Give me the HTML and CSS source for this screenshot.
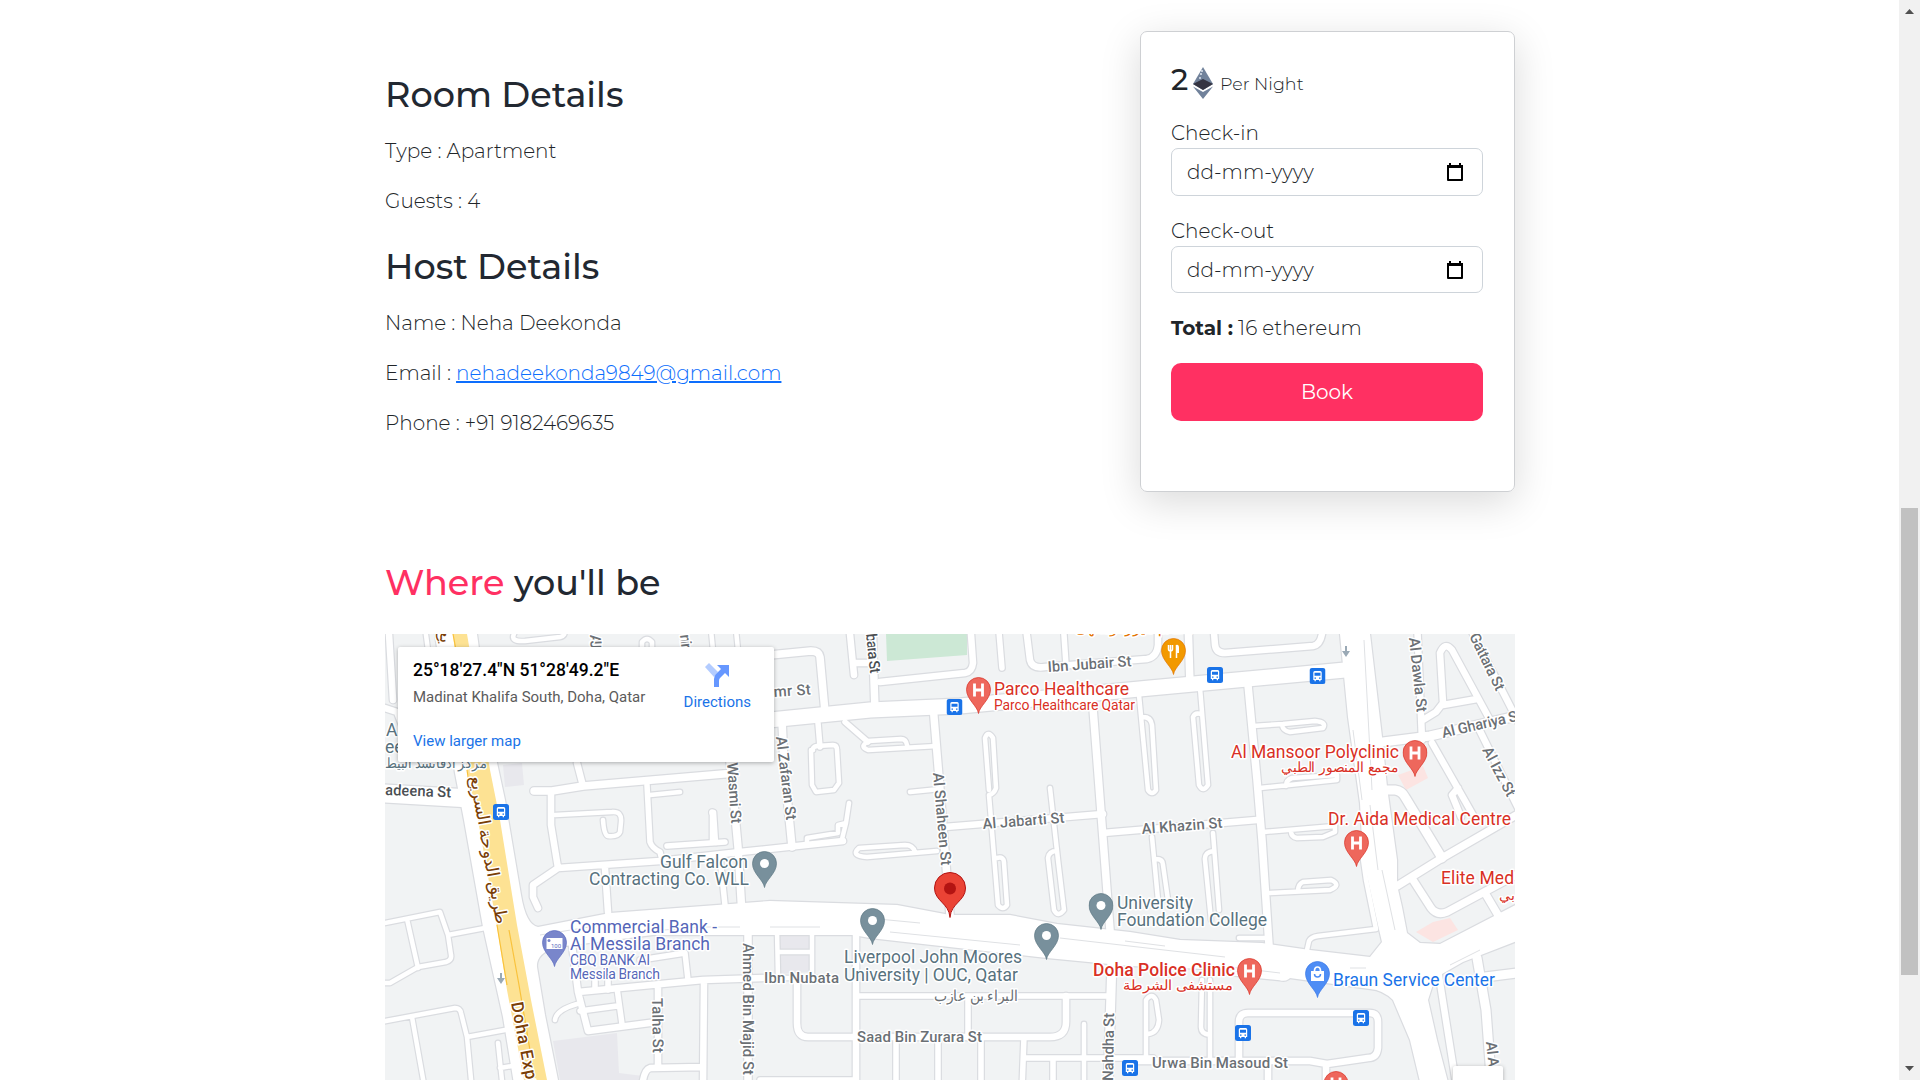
FILE: index.html
```html
<!DOCTYPE html>
<html lang="en">
<head>
  <meta charset="UTF-8">
  <meta name="viewport" content="width=device-width, initial-scale=1">
  <title>Room Details</title>
  <link rel="stylesheet" href="styles.css">
</head>
<body>
  <main class="page">
    <div class="details-row">
      <section class="details">
        <h3>Room Details</h3>
        <p>Type : Apartment</p>
        <p>Guests : 4</p>
        <h3 class="title-host">Host Details</h3>
        <p>Name : Neha Deekonda</p>
        <p>Email : <a href="mailto:nehadeekonda9849@gmail.com">nehadeekonda9849@gmail.com</a></p>
        <p>Phone : +91 9182469635</p>
      </section>

      <form class="booking-card">
        <div class="price">
          <span class="amount">2</span>
          <svg class="eth" viewBox="0 0 20 32">
            <path d="M10 0 0 17l10 6 10-6z" fill="#71829b"/>
            <path d="M10 12 0 17l10 6 10-6z" fill="#343442"/>
            <path d="m0 19.500 10 12.500 10-12.500-10 5.500z" fill="#71829b"/>
            <path d="M9 3v2M8 6v2M7 10v2" stroke="#dfe6ef" stroke-width="1.500"/>
          </svg>
          <small>Per Night</small>
        </div>

        <label for="check-in">Check-in</label>
        <div class="date-field">
          <input type="text" id="check-in" value="dd-mm-yyyy">
          <svg class="calendar" viewBox="0 0 16 18"><path d="M1 3h14v14H1z" fill="none" stroke="#000" stroke-width="2" stroke-linejoin="round"/><path d="M0 2h16v3H0zM2 0h2v3H2zM12 0h2v3h-2z"/></svg>
        </div>

        <label for="check-out" class="label-out">Check-out</label>
        <div class="date-field field-out">
          <input type="text" id="check-out" value="dd-mm-yyyy">
          <svg class="calendar" viewBox="0 0 16 18"><path d="M1 3h14v14H1z" fill="none" stroke="#000" stroke-width="2" stroke-linejoin="round"/><path d="M0 2h16v3H0zM2 0h2v3H2zM12 0h2v3h-2z"/></svg>
        </div>

        <p class="total"><b>Total :</b> <span>16 ethereum</span></p>
        <button type="button">Book</button>
      </form>
    </div>

    <h3 class="where"><span>Where</span> you'll be</h3>

    <div class="map">
      <svg class="map-canvas" viewBox="385 634 1130 446">
        <defs>
          <symbol id="pin" viewBox="0 0 25 37">
            <path d="M12.500 36.500C11.500 29 .5 22.500 .5 12.500a12 12 0 0 1 24 0c0 10-11 16.500-12 24z"/>
          </symbol>
          <symbol id="hospital" viewBox="0 0 25 37">
            <use href="#pin" width="25" height="37" fill="#ee675c" stroke="#d93025" stroke-width=".7"/>
            <path d="M8.500 6.500v13M16.500 6.500v13M8.500 13h8" fill="none" stroke="#fff" stroke-width="2.800"/>
          </symbol>
          <symbol id="place" viewBox="0 0 25 37">
            <use href="#pin" width="25" height="37" fill="#78909c" stroke="#5f7884" stroke-width=".7"/>
            <circle cx="12.500" cy="12.500" r="4.500" fill="#fff"/>
          </symbol>
          <symbol id="bus" viewBox="0 0 16 16">
            <rect width="16" height="16" rx="2.500" fill="#1a73e8"/>
            <path d="M3.800 4.500q0-1.500 1.500-1.500h5.400q1.500 0 1.500 1.500V12h-1.200v1.300H9.700V12H6.300v1.300H5V12H3.800z" fill="#fff"/>
            <path d="M5 4.800h6v3H5zM5 9.500h1.500v1.300H5zM9.500 9.500H11v1.300H9.500z" fill="#1a73e8"/>
          </symbol>

          <g id="roads">
            <!-- main corridors -->
            <path class="area" d="M435 634H477L490 730 505 800 510 830 521 895Q526 925 538 927L610 913 770 901 897 905 950 915H1010L1057 924 1130 932 1180 940 1262 943 1310 950 1370 957 1382 942 1378 925 1363 857 1360 803 1348 717 1340 634H1370L1382 737 1387 787 1397 860V885L1402 907 1407 933 1420 943 1440 944 1525 900V938L1463 962 1435 978 1428 1000 1437 1040 1450 1090H1422L1410 1040 1393 1000Q1383 990 1370 989L1297 979 1230 970 1130 966 1047 958 870 938 853 935H653L557 947Q536 953 537 967L545 1015 560 1090H515L503 1017 483 927 464 820 455 773z"/>
            <path class="w15" d="M750 722 870 710 960 706 1150 688 1345 670"/>
            <path class="w18" d="M375 793 462 798"/>
            <!-- north west -->
            <path class="w7" d="M389 634 393 700M385 708 397 712 408 740M577 763 583 786M551 792V825L558 868 533 885V897L538 908M558 868 660 861 740 852 843 841M605 868 608 912M850 634 854 675M854 663H870"/>
            <path class="w5" d="M424 620 428 650M514 634Q510 642 525 641L560 637Q566 636 564 630M642 650V642Q647 636 652 642V650M710 620 713 650M735 620 738 650M555 815 612 812Q622 811 621 822L620 832Q618 837 608 836 604 835 603 820M650 795 680 792M712 843V815Q710 810 714 812L716 843"/>
            <path class="w8" d="M534 791H552L583 786 735 773M770 655 811 651Q819 651 820 657L825 712M728 740 738 847 742 915M872 620 875 710"/>
            <path class="w6" d="M647 785 650 842Q652 848 660 852L662 860M667 846 725 842M720 857 725 905"/>
            <path class="w7" d="M970 620 973 663Q972 672 965 673L880 682M1025 620 1030 660Q1032 669 1045 667L1147 659Q1157 657 1158 645V620M1213 620 1215 645Q1216 653 1225 653L1313 646Q1320 645 1322 634V620"/>
            <path class="w6" d="M998 620 1002 668M1063 620 1066 665M818 723 820 747M845 722 868 742"/>
            <path class="w8" d="M1188 620 1190 685M782 720 784 765 792 847M933 705 940 790 950 915M1092 695 1097 760 1110 930M1248 685 1257 780 1262 840 1269 945"/>
            <path class="w5" d="M813 750Q812 747 817 746L833 745Q837 745 837 750L839 783 834 790 816 792 812 785 811 750M868 741 901 739Q906 739 907 745M870 741Q858 746 868 750L937 746M849 803 846 823 842 839M846 823 838 825V833L807 838V843M910 792 940 789M937 851 867 857Q850 856 859 848L905 845Q913 845 915 852"/>
            <path class="w5" d="M989 790 985 738Q988 730 993 738L996 788Q994 794 989 795L998 905Q1003 911 1007 905L1004 863Q1004 856 997 858M1050 788 1058 860 1064 910Q1058 918 1054 910L1048 858Q1049 851 1057 851M1139 695 1148 790Q1152 796 1156 790L1152 725Q1151 717 1143 717M1200 688 1208 785Q1203 793 1199 785L1193 717Q1195 712 1201 714M1152 837 1158 900M1156 859Q1163 859 1163 865L1168 900M1213 833 1219 910M1214 851Q1204 852 1205 860L1211 920"/>
            <path class="w7" d="M945 827 1103 814M1103 833 1257 820"/>
            <path class="w5" d="M1253 726 1283 724 1315 721Q1327 722 1323 728L1290 732Q1283 731 1282 725M1260 788 1337 780V775L1292 778Q1286 780 1286 786M1263 832 1335 826V832L1323 837 1297 838Q1291 837 1291 831M1270 893 1330 890Q1342 885 1331 880L1303 882Q1298 884 1298 891M1307 950 1309 941Q1311 937 1318 936L1376 929 1366 880 1362 852"/>
            <!-- north east -->
            <path class="w9" d="M1375 743 1430 736 1525 714M1384 790H1395Q1402 791 1405 797L1442 858"/>
            <path class="w7" d="M1417 620 1422 740M1423 720 1436 712 1443 703 1440 653Q1445 641 1452 650L1490 720M1443 705 1477 699M1478 727 1525 822M1466 620 1525 735M1432 743 1473 815M1458 788 1452 795 1461 817"/>
            <path class="w8" d="M1525 810 1442 858 1397 886M1413 880 1431 908Q1437 916 1447 912L1525 870M1485 893 1498 915"/>
            <!-- south west -->
            <path class="w5" d="M375 925 440 912 448 935 485 928M407 919 418 968M375 983H390L418 967 446 962Q452 960 451 955L448 935M375 1023 455 1008Q460 1008 461 1013L467 1037 505 1030M412 1017 425 1090M467 1037 472 1090M498 1043 503 1090M500 1068 512 1066M555 1020Q556 1010 577 1004"/>
            <path class="w7" d="M572 945 578 992 588 1031 657 1022M578 992 703 980 763 978M658 985V1067M642 1090Q643 1070 650 1068L703 1067M704 980 703 1090"/>
            <path class="w6" d="M580 1011 617 1006M617 988 622 1024M640 960 685 953 688 980M595 975V990M608 975V990"/>
            <path class="w8" d="M748 930V1090"/>
            <!-- south centre -->
            <path class="w5" d="M777 930 778 978M812 930V978M778 952H812M778 978H830M1084 1024V1090M1146 1060V1000Q1152 992 1156 1000L1159 1020Q1158 1033 1148 1034M1202 980 1201 1027Q1201 1034 1210 1035M1210 980V1060M1230 973 1280 978Q1287 980 1290 974M1239 938H1267"/>
            <path class="w7" d="M797 980V1023Q797 1037 808 1037H1050Q1066 1037 1066 1022V996M856 933V1090M1239 1062V1022Q1239 1013 1248 1013H1370Q1378 1013 1378 1022V1048Q1377 1058 1368 1058L1327 1064 1310 1061H1130M1326 1064V1090M1268 1064V1090M1438 970 1457 1090"/>
            <path class="w6" d="M856 996H1110M968 996V1037M896 1037V1090M938 1037V1090M981 1037V1090M1024 1037 1022 1090M1026 1058H1153M1053 1058V1090M760 1080H856"/>
            <path class="w9" d="M1112 960 1108 1090M1477 958 1486 1010 1492 1090M1485 977 1525 972"/>
          </g>
        </defs>

        <rect class="land" x="385" y="634" width="1130" height="446"/>
        <path fill="#cce8d5" d="M886 634H967V655L887 661z"/>
        <path fill="#e8e8ed" d="M503 765 522 763 524 785 505 787zM553 1041 617 1033 619 1073 643 1076V1080H560zM779 934H811V950H779zM779 955H811V972L780 974z"/>
        <path fill="#fce4e2" d="M1398 775 1423 766 1428 778 1406 790zM1416 932 1433 922 1450 918 1458 930 1433 942z"/>
        <use class="casing" href="#roads"/>
        <use class="surface" href="#roads"/>
        <path class="lane" d="M540 935 620 922M640 932 700 927H740M770 927H820M878 919 920 923M890 932 1020 945M1060 938 1225 957M1125 941 1165 946M1230 967 1280 973M1353 730 1362 800M1364 640 1372 790M1370 805 1378 870M1382 870 1395 930M1450 965 1480 950M1350 968H1366"/>
        <path fill="#fde293" d="M453 634H467L490 770 500 820 517 925 531 1000 547 1080H524L507 990 497 927 478 820 467 770z"/>
        <path fill="none" stroke="#f9c23c" stroke-width="1.200" d="M453 634 456 650M467 770 470 790M497 925 507 985M509 930 519 985 535 1080"/>
        <path fill="#9aa9b5" d="M1345 646h2v5h3l-4 6-4-6h3zM500 973h2v5h3l-4 6-4-6h3z"/>

        <g class="street">
          <text transform="translate(385 795) rotate(2)" class="dark" textLength="66">adeena St</text>
          <text transform="translate(590 635) rotate(87)" textLength="14">Al J</text>
          <text transform="translate(680 635) rotate(84)" textLength="14">nir</text>
          <text transform="translate(774 697) rotate(-4)" textLength="37">mr St</text>
          <text transform="translate(866 634) rotate(84)" class="dark" textLength="40">bara St</text>
          <text transform="translate(1048 672) rotate(-4)" textLength="84">Ibn Jubair St</text>
          <text transform="translate(776 737) rotate(83)" textLength="84">Al Zafaran St</text>
          <text transform="translate(727 763) rotate(86)" textLength="61">Wasmi St</text>
          <text transform="translate(933 773) rotate(85)" textLength="93">Al Shaheen St</text>
          <text transform="translate(983 829) rotate(-4.500)" textLength="82">Al Jabarti St</text>
          <text transform="translate(1142 834) rotate(-4.500)" textLength="81">Al Khazin St</text>
          <text transform="translate(1409 638) rotate(84)" textLength="75">Al Dawla St</text>
          <text transform="translate(1469 636) rotate(64)" textLength="62">Gattara St</text>
          <text transform="translate(1443 738) rotate(-13)" textLength="82">Al Ghariya St</text>
          <text transform="translate(1482 750) rotate(62)" textLength="54">Al Izz St</text>
          <text x="764" y="983" textLength="75">Ibn Nubata</text>
          <text transform="translate(743 943) rotate(90)" textLength="132">Ahmed Bin Majid St</text>
          <text transform="translate(652 998) rotate(89)" textLength="55">Talha St</text>
          <text x="857" y="1042" textLength="125">Saad Bin Zurara St</text>
          <text transform="translate(1113 1081) rotate(-89)" textLength="68">Nahdha St</text>
          <text x="1152" y="1068" textLength="136">Urwa Bin Masoud St</text>
          <text transform="translate(1486 1042) rotate(84)" textLength="38">Al Am</text>
          <text x="976" y="1001" text-anchor="middle" textLength="84" lengthAdjust="spacingAndGlyphs">البراء بن عازب</text>
        </g>
        <g class="highway">
          <text transform="translate(511 1003) rotate(79)" textLength="88">Doha Expy</text>
          <text transform="translate(483 851) rotate(80)" text-anchor="middle" textLength="150" lengthAdjust="spacingAndGlyphs">طريق الدوحة السريع</text>
          <text transform="translate(440 637) rotate(80)" text-anchor="middle">يع</text>
        </g>

        <g class="poi teal">
          <text x="386" y="736">A</text>
          <text x="385" y="753">ee</text>
          <text class="sub" x="436" y="768" text-anchor="middle" textLength="102" lengthAdjust="spacingAndGlyphs">مركز ادفانسد البيط</text>
          <text x="660" y="868" textLength="88">Gulf Falcon</text>
          <text x="589" y="885" textLength="160">Contracting Co. WLL</text>
          <text x="844" y="963" textLength="178">Liverpool John Moores</text>
          <text x="844" y="981" textLength="174">University | OUC, Qatar</text>
          <text x="1117" y="909" textLength="76">University</text>
          <text x="1117" y="926" textLength="150">Foundation College</text>
        </g>
        <g class="poi red">
          <text x="994" y="695" textLength="135">Parco Healthcare</text>
          <text class="sub" x="994" y="710" textLength="141">Parco Healthcare Qatar</text>
          <text x="1231" y="758" textLength="168">Al Mansoor Polyclinic</text>
          <text class="sub" x="1340" y="772" text-anchor="middle" textLength="118" lengthAdjust="spacingAndGlyphs">مجمع المنصور الطبي</text>
          <text x="1328" y="825" textLength="183">Dr. Aida Medical Centre</text>
          <text x="1441" y="884" textLength="73">Elite Med</text>
          <text class="sub" x="1499" y="900">بي</text>
          <text class="strong" x="1093" y="976" textLength="142">Doha Police Clinic</text>
          <text class="sub" x="1178" y="990" text-anchor="middle" textLength="110" lengthAdjust="spacingAndGlyphs">مستشفى الشرطة</text>
        </g>
        <g class="poi indigo">
          <text x="570" y="933" textLength="147">Commercial Bank -</text>
          <text x="570" y="950" textLength="140">Al Messila Branch</text>
          <text class="sub" x="570" y="965" textLength="80">CBQ BANK Al</text>
          <text class="sub" x="570" y="979" textLength="90">Messila Branch</text>
        </g>
        <text class="poi blue" x="1333" y="986" textLength="162">Braun Service Center</text>
        <text class="poi orange sub" x="1135" y="633" text-anchor="middle" textLength="120" lengthAdjust="spacingAndGlyphs">مطعم ميرزا ومقهى</text>

        <use href="#hospital" x="966" y="677" width="25" height="37"/>
        <use href="#hospital" x="1402.500" y="740" width="25" height="37"/>
        <use href="#hospital" x="1344" y="830" width="25" height="37"/>
        <use href="#hospital" x="1237" y="958" width="25" height="37"/>
        <use href="#hospital" x="1323.500" y="1071" width="25" height="37"/>
        <use href="#place" x="752" y="851" width="25" height="37"/>
        <use href="#place" x="860" y="908" width="25" height="37"/>
        <use href="#place" x="1034" y="923" width="25" height="37"/>
        <use href="#place" x="1088.500" y="893" width="25" height="37"/>
        <g transform="translate(1161 638)">
          <use href="#pin" width="25" height="37" fill="#f29900" stroke="#e37400" stroke-width=".7"/>
          <path d="M7.500 7v4q0 2 2 2t2-2V7M9.500 7v13M15.500 7v13" fill="none" stroke="#fff" stroke-width="1.500"/>
          <path d="M15 7q3-1 3 3v5h-3z" fill="#fff"/>
        </g>
        <g transform="translate(1305 961)">
          <use href="#pin" width="25" height="37" fill="#4e8df5" stroke="#3b78e7" stroke-width=".7"/>
          <path d="M6 10h13v10H6z" fill="#fff"/>
          <path d="M9.500 10q0-4 3-4t3 4" fill="none" stroke="#fff" stroke-width="1.700"/>
          <path d="M9.500 13q0 3 3 3t3-3" fill="none" stroke="#4e8df5" stroke-width="1.500"/>
        </g>
        <g transform="translate(542 930)">
          <use href="#pin" width="25" height="37" fill="#7986cb" stroke="#5c6bc0" stroke-width=".7"/>
          <path d="M4.500 8h16v11h-16z" fill="#fff"/>
          <circle cx="7" cy="10.500" r="1.500" fill="#7986cb"/>
          <text class="note" x="9" y="17.500">100</text>
        </g>
        <path d="M950 917.500C949 903 934.500 901 934.500 888a15.500 15.500 0 0 1 31 0c0 13-14.500 15-15.500 29.500z" fill="#ea4335" stroke="#b31412"/>
        <circle cx="950" cy="888.500" r="6" fill="#b31412"/>

        <use href="#bus" x="946.500" y="699" width="16" height="16"/>
        <use href="#bus" x="1207" y="667" width="16" height="16"/>
        <use href="#bus" x="1309.500" y="668" width="16" height="16"/>
        <use href="#bus" x="493" y="804" width="16" height="16"/>
        <use href="#bus" x="1122" y="1060" width="16" height="16"/>
        <use href="#bus" x="1235" y="1025" width="16" height="16"/>
        <use href="#bus" x="1353" y="1010" width="16" height="16"/>
      </svg>

      <div class="map-card">
        <div class="map-place">
          <div class="coords">25°18'27.4"N 51°28'49.2"E</div>
          <div class="address">Madinat Khalifa South, Doha, Qatar</div>
          <a class="larger" href="#">View larger map</a>
        </div>
        <a class="directions" href="#">
          <svg viewBox="0 0 24 24"><path d="M0 4 4 0l9 9-4 5z" fill="#b3ccff"/><path d="M9 24V16q0-3 2-5l5-5-4-4h12v12l-4-4-5 5q-1 1-1 3v6z" fill="#6697ff"/></svg>
          <span>Directions</span>
        </a>
      </div>
      <div class="map-control"></div>
    </div>
  </main>

  <div class="scrollbar">
    <svg width="9" height="5" viewBox="0 0 9 5"><path d="M4.500 0 9 5H0z"/></svg>
    <div class="thumb"></div>
    <svg width="9" height="5" viewBox="0 0 9 5"><path d="M0 0h9L4.500 5z"/></svg>
  </div>
</body>
</html>
```

FILE: styles.css
```css
* {
  box-sizing: border-box;
}

body {
  margin: 0;
  height: 1080px;
  display: flex;
  justify-content: space-between;
  overflow: hidden;
  background-color: #fff;
  color: #212529;
  font-family: "Montserrat", "Inter", sans-serif;
  font-size: 20px;
  font-weight: 300;
  line-height: 30px;
}

.page {
  width: 1130px;
  margin-left: 385px;
}

/* Room and host details */
.details-row {
  display: flex;
  justify-content: space-between;
  height: 562px;
}

.details {
  padding-top: 74px;
}

h3 {
  margin: 0 0 20px;
  font-size: 35px;
  font-weight: 500;
  line-height: 42px;
  color: #222831;
}

p {
  margin: 0 0 20px;
}

.title-host {
  margin-top: 30px;
}

a {
  color: #0d6efd;
}

/* Booking card */
.booking-card {
  width: 375px;
  height: 461px;
  margin-top: 31px;
  padding: 29px 31px 0 30px;
  border: 1px solid #ced0d3;
  border-radius: 7px;
  box-shadow: 0 10px 40px rgba(0, 0, 0, 0.15);
}

.price {
  display: flex;
  height: 57px;
  align-items: flex-start;
}

.amount {
  width: 22px;
  padding-top: 4px;
  font-size: 30px;
  font-weight: 500;
}

.eth {
  width: 20px;
  height: 32px;
  margin-top: 6px;
}

.price small {
  padding: 8px 0 0 7px;
  font-size: 17.5px;
}

label {
  display: block;
}

.label-out {
  margin-top: 20px;
}

.date-field {
  height: 48px;
  display: flex;
  align-items: center;
  justify-content: space-between;
  padding: 0 19px 0 15px;
  border: 1px solid #ced4da;
  border-radius: 7px;
}

.field-out {
  height: 47px;
}

.date-field input {
  width: 200px;
  padding: 0;
  border: none;
  outline: none;
  background: none;
  font: inherit;
  color: #212529;
}

.calendar {
  width: 16px;
  height: 18px;
}

.total {
  margin: 20px 0;
}

.total b {
  font-weight: 700;
}

.booking-card button {
  width: 100%;
  height: 58px;
  border: none;
  border-radius: 10px;
  background-color: #ff3062;
  color: #fff;
  font: inherit;
  font-weight: 400;
}

.where span {
  color: #ff3062;
}

.where {
  margin-bottom: 30px;
}

/* Map */
.map {
  position: relative;
  height: 446px;
  overflow: hidden;
  font-family: "Roboto", sans-serif;
}

.map-canvas {
  display: block;
  width: 1130px;
  height: 446px;
}

.land {
  fill: #f1f3f4;
}

.casing {
  --edge: 2.4px;
  stroke: #dadce0;
  fill: #dadce0;
}

.surface {
  --edge: 0px;
  stroke: #fff;
  fill: #fff;
}

#roads path {
  fill: none;
  stroke-linecap: round;
  stroke-linejoin: round;
}

#roads .area {
  fill: inherit;
  stroke-width: var(--edge);
}

#roads .w5 { stroke-width: calc(4.5px + var(--edge)); }
#roads .w6 { stroke-width: calc(5.5px + var(--edge)); }
#roads .w7 { stroke-width: calc(6.5px + var(--edge)); }
#roads .w8 { stroke-width: calc(7.5px + var(--edge)); }
#roads .w9 { stroke-width: calc(9px + var(--edge)); }
#roads .w15 { stroke-width: calc(15px + var(--edge)); }
#roads .w18 { stroke-width: calc(18px + var(--edge)); }

.lane {
  fill: none;
  stroke: #dfe1e4;
}

.map text {
  paint-order: stroke;
  stroke: #fff;
  stroke-width: 3px;
  stroke-linejoin: round;
  font-weight: 400;
}

.map .street text {
  font-weight: 500;
}

.street {
  font-size: 15px;
  fill: #6b7075;
}

.street .dark {
  fill: #4a4e52;
}

.highway {
  font-size: 17px;
  fill: #7a3e06;
}

.map .highway text {
  font-weight: 500;
}

.poi {
  font-size: 17.5px;
}

.sub {
  font-size: 14px;
}

.map .strong {
  font-weight: 500;
}

.teal { fill: #58727e; }
.red { fill: #d93025; }
.indigo { fill: #5566b8; }
.blue { fill: #1a73e8; }
.orange { fill: #e37400; }

.map .note {
  font-size: 6px;
  fill: #5c6bc0;
  stroke: none;
}

.map-card {
  position: absolute;
  top: 13px;
  left: 13px;
  width: 376px;
  height: 115px;
  display: flex;
  justify-content: space-between;
  padding: 12px 23px 0 15px;
  border-radius: 2px;
  background-color: #fff;
  box-shadow: 0 1px 4px rgba(0, 0, 0, 0.3);
  font-size: 15px;
  font-weight: 400;
  line-height: 20px;
}

.map-card a {
  color: #1a73e8;
  text-decoration: none;
}

.coords {
  font-size: 17.5px;
  font-weight: 500;
  line-height: 22px;
  color: #000;
}

.address {
  margin-top: 6px;
  color: #5b5b5b;
}

.larger {
  display: block;
  margin-top: 24px;
}

.directions {
  display: flex;
  flex-direction: column;
  align-items: center;
}

.directions svg {
  width: 24px;
  height: 24px;
  margin: 4px 0 5px;
}

.map-control {
  position: absolute;
  top: 432px;
  left: 1068px;
  width: 50px;
  height: 50px;
  border-radius: 2px;
  background-color: #fff;
  box-shadow: 0 1px 4px rgba(0, 0, 0, 0.3);
}

/* Page scrollbar */
.scrollbar {
  width: 21px;
  height: 1080px;
  display: flex;
  flex-direction: column;
  align-items: center;
  padding-top: 9px;
  background-color: #f1f1f1;
}

.scrollbar svg {
  flex-shrink: 0;
  fill: #505050;
}

.thumb {
  flex-shrink: 0;
  width: 17px;
  height: 467px;
  margin: 494px 0 91px;
  background-color: #c1c1c1;
}
```
